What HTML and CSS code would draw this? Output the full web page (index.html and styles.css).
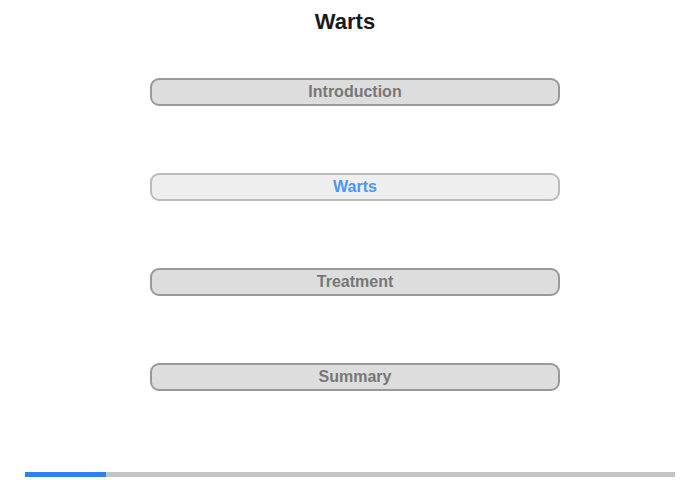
FILE: index.html
```html
<!DOCTYPE html>
<html>
<head>
<meta charset="utf-8">
<link rel="stylesheet" href="styles.css">
</head>
<body>
<div class="page">
  <h1 class="title">Warts</h1>
  <nav class="menu">
    <div class="item">Introduction</div>
    <div class="item active">Warts</div>
    <div class="item">Treatment</div>
    <div class="item">Summary</div>
  </nav>
  <div class="progress"><div class="fill" style="width:81px"></div></div>
</div>
</body>
</html>
```
FILE: styles.css
```css
html, body { margin: 0; padding: 0; background: #fff; }
body { font-family: "Liberation Sans", Arial, sans-serif; }
.page { width: 700px; height: 480px; display: flex; flex-direction: column; align-items: center; }
.title { margin: 9px 10px 0 0; height: 25px; line-height: 25px; font-size: 22px; font-weight: bold; color: #1a1a1a; }
.menu { margin: 44px 0 0 10px; display: flex; flex-direction: column; gap: 67px; }
.item { box-sizing: border-box; width: 410px; height: 28px; border: 2px solid #999; border-radius: 9px; background: #ddd; color: #777; font-size: 16px; font-weight: bold; text-align: center; line-height: 24px; }
.item.active { background: #eee; border-color: #bbb; color: #4a97f5; }
.progress { margin-top: 81px; width: 650px; height: 5px; background: #c4c4c4; }
.fill { height: 100%; background: #2f7ff0; }
```
